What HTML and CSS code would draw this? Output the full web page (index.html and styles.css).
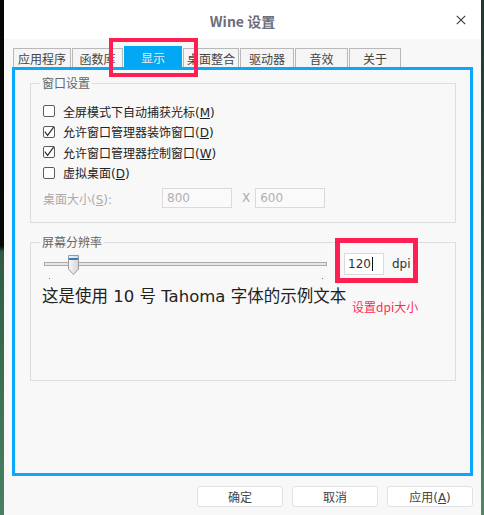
FILE: index.html
```html
<!DOCTYPE html>
<html lang="zh-CN">
<head>
<meta charset="utf-8">
<title>Wine 设置</title>
<link rel="stylesheet" href="styles.css">
</head>
<body>
<div class="desk desk-left"></div>
<div class="window">
  <header class="titlebar">
    <span></span>
    <span class="title">Wine 设置</span>
    <span class="close" aria-label="关闭"><svg width="10" height="10" viewBox="0 0 10 10"><path d="M0.8 0.8L9.2 9.2M9.2 0.8L0.8 9.2" stroke="#3a3a3a" stroke-width="1.1" fill="none"/></svg></span>
  </header>
  <nav class="tabs">
    <span class="tab w58">应用程序</span>
    <span class="tab w51">函数库</span>
    <span class="tab w58 active">显示</span>
    <span class="tab w56">桌面整合</span>
    <span class="tab w54">驱动器</span>
    <span class="tab w53">音效</span>
    <span class="tab w52">关于</span>
  </nav>
  <section class="panel">
    <fieldset class="group group-window">
      <legend>窗口设置</legend>
      <div class="group-body">
        <label class="check"><span class="box"></span><span class="text">全屏模式下自动捕获光标(<u>M</u>)</span></label>
        <label class="check"><span class="box"><svg width="12" height="12" viewBox="0 0 12 12"><path d="M1.8 5.6L4.6 9.4L11 0.6" stroke="#333" stroke-width="1.2" fill="none"/></svg></span><span class="text">允许窗口管理器装饰窗口(<u>D</u>)</span></label>
        <label class="check"><span class="box"><svg width="12" height="12" viewBox="0 0 12 12"><path d="M1.8 5.6L4.6 9.4L11 0.6" stroke="#333" stroke-width="1.2" fill="none"/></svg></span><span class="text">允许窗口管理器控制窗口(<u>W</u>)</span></label>
        <label class="check"><span class="box"></span><span class="text">虚拟桌面(<u>D</u>)</span></label>
        <div class="desk-size">
          <span class="dim-label">桌面大小(<u>S</u>):</span>
          <span class="field disabled">800</span>
          <span class="times">X</span>
          <span class="field disabled">600</span>
        </div>
      </div>
    </fieldset>
    <fieldset class="group group-dpi">
      <legend>屏幕分辨率</legend>
      <div class="group-body dpi-body">
        <div class="dpi-row">
          <div class="slider">
            <span class="track"></span>
            <svg class="thumb" width="11" height="20" viewBox="0 0 11 20">
              <defs><linearGradient id="tg" x1="0" y1="0" x2="1" y2="0"><stop offset="0" stop-color="#f6f6f6"/><stop offset="1" stop-color="#d6d6d6"/></linearGradient></defs>
              <path d="M0.5 0.5H10.5V14L5.5 19.5L0.5 14Z" fill="url(#tg)" stroke="#9a9a9a"/>
              <rect x="1" y="3" width="9" height="2" fill="#2b7fd8"/>
            </svg>
            <span class="tick tick-a"></span>
            <span class="tick tick-b"></span>
          </div>
          <span class="field dpi-input">120<span class="caret"></span></span>
          <span class="unit">dpi</span>
        </div>
        <p class="sample">这是使用 10 号 Tahoma 字体的示例文本</p>
      </div>
    </fieldset>
  </section>
  <footer class="buttons">
    <button class="btn">确定</button>
    <button class="btn">取消</button>
    <button class="btn">应用(<u>A</u>)</button>
  </footer>
  <div class="mark mark-tab"></div>
  <div class="mark mark-dpi"></div>
  <span class="mark-note">设置dpi大小</span>
</div>
<div class="desk desk-right"></div>
</body>
</html>
```
FILE: styles.css
```css
* { box-sizing: border-box; }
html, body { margin: 0; padding: 0; }
body {
  display: flex;
  width: 484px;
  height: 515px;
  overflow: hidden;
  font-family: "DejaVu Sans", "Noto Sans CJK SC", sans-serif;
  font-size: 12px;
  color: #333;
  background: #070907;
}
.desk { flex: none; height: 515px; }
.desk-left {
  width: 4px;
  background: linear-gradient(to bottom, #050705 0, #060806 246px, #2f5b43 252px, #3d7254 400px, #4a8062 515px);
}
.desk-right {
  width: 3px;
  background: linear-gradient(to bottom, #1f3931 0, #2b5242 250px, #4c8c63 515px);
}
.window {
  position: relative;
  flex: none;
  width: 477px;
  height: 515px;
  background: #f8f8f8;
  display: flex;
  flex-direction: column;
}
.titlebar {
  height: 39px;
  flex: none;
  background: #fff;
  display: grid;
  grid-template-columns: 1fr auto 1fr;
  align-items: center;
}
.title {
  font-family: "Noto Sans CJK SC", sans-serif;
  font-weight: bold;
  font-size: 14px;
  color: #6b6d7b;
  line-height: 18px;
  padding-top: 2px;
}
.close {
  justify-self: end;
  margin-right: 15px;
  display: flex;
}
.tabs {
  display: flex;
  align-items: flex-end;
  gap: 1px;
  height: 21px;
  margin: 7px 0 0 9px;
  flex: none;
}
.tab {
  height: 19px;
  border: 1px solid #b9b9b9;
  border-bottom: none;
  background: #f5f5f5;
  color: #444;
  font-family: "Noto Sans CJK SC", sans-serif;
  font-size: 12px;
  display: flex;
  align-items: center;
  justify-content: center;
}
.w58 { width: 58px; }
.w56 { width: 56px; }
.w54 { width: 54px; }
.w53 { width: 53px; }
.w52 { width: 52px; }
.w51 { width: 51px; }
.tab.active {
  height: 21px;
  background: #03a8f5;
  border-color: #03a8f5;
  color: #e4ecf2;
}
.panel {
  flex: none;
  height: 409px;
  margin: 0 8px;
  border: 3px solid #08a9fb;
  padding: 6px 14px 0 15px;
  display: flex;
  flex-direction: column;
}
.group {
  margin: 0;
  padding: 0;
  min-width: 0;
  border: 1px solid #dddddd;
}
.group legend {
  margin-left: 9px;
  padding: 0 2px;
  font-family: "Noto Sans CJK SC", sans-serif;
  font-size: 12px;
  line-height: 14px;
  color: #666;
}
.group-body { padding: 11px 14px 14px 12px; }
.group-dpi { margin-top: 12px; }
.dpi-body { padding: 4px 14px 73px 12px; }
.check {
  display: flex;
  align-items: center;
  gap: 8px;
  height: 20.5px;
  color: #222;
}
.box {
  width: 12px;
  height: 12px;
  flex: none;
  border: 1px solid #5c5c5c;
  border-radius: 2px;
  background: #fff;
  position: relative;
}
.box svg { position: absolute; left: -1px; top: -1px; overflow: visible; }
.desk-size {
  display: flex;
  align-items: center;
  height: 20px;
  margin-top: 5px;
}
.dim-label { width: 119px; color: #aaa; }
.field {
  height: 20px;
  border: 1px solid #dadada;
  display: flex;
  align-items: center;
  padding-left: 4px;
}
.field.disabled { width: 70px; color: #b0b0b0; background: #fafafa; }
.times { color: #aaa; margin: 0 5px 0 10px; }
.dpi-row {
  display: flex;
  align-items: center;
  height: 22px;
}
.slider {
  position: relative;
  width: 283px;
  height: 22px;
  margin-left: 1px;
}
.track {
  position: absolute;
  left: 0;
  right: 0;
  top: 9px;
  height: 4px;
  border: 1px solid #ababab;
  background: #e6e6e6;
}
.thumb { position: absolute; left: 24px; top: 2px; }
.tick {
  position: absolute;
  top: 25px;
  width: 1px;
  height: 1px;
  background: #777;
}
.tick-a { left: 5px; }
.tick-b { left: 278px; }
.dpi-input {
  width: 40px;
  height: 22px;
  margin-left: 17px;
  padding-left: 3px;
  background: #fff;
  color: #333;
}
.caret {
  width: 1px;
  height: 14px;
  background: #111;
  margin-left: 1px;
}
.unit { margin-left: 8px; color: #333; }
.sample {
  margin: 12px 0 0 -1px;
  font-size: 16.5px;
  line-height: 20px;
  color: #222;
}
.buttons {
  display: flex;
  justify-content: flex-end;
  gap: 9px;
  margin-top: 10px;
  padding-right: 8px;
}
.btn {
  width: 86px;
  height: 21px;
  padding: 0;
  background: #fff;
  border: 1px solid #e2e2e2;
  border-radius: 3px;
  font: inherit;
  font-size: 12px;
  color: #444;
}
.mark {
  position: absolute;
  border: 4px solid #ff1f52;
}
.mark-tab { left: 105px; top: 38px; width: 89px; height: 39px; }
.mark-dpi { left: 331px; top: 238px; width: 83px; height: 45px; border-width: 5px; }
.mark-note {
  position: absolute;
  left: 348px;
  top: 299px;
  font-family: "Noto Sans CJK SC", sans-serif;
  font-size: 12px;
  line-height: 16px;
  color: #ff2d55;
}
```
